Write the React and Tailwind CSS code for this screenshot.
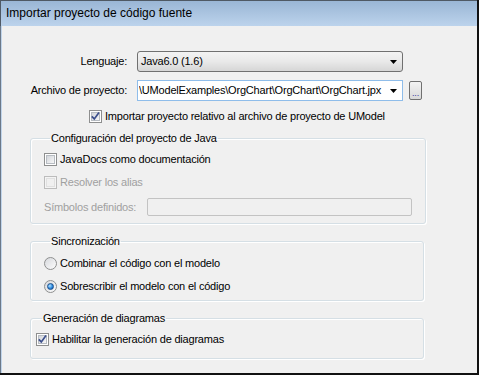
import React from "react";

function Check({ checked, disabled }) {
    return (
        <span
            className={`flex h-[13px] w-[13px] shrink-0 items-center justify-center border ${
                disabled ? "border-[#bcbcbc] bg-[#f4f4f4]" : "border-[#8e8f8f] bg-white"
            }`}
        >
            <span
                className={`flex h-[9px] w-[9px] items-center justify-center border ${
                    disabled
                        ? "border-[#e0e0e0] bg-[#f0f0f0]"
                        : "border-[#b7bcc2] bg-linear-to-br from-[#d3d6db] to-[#f7f7f7]"
                }`}
            >
                {checked && (
                    <svg width="9" height="9" viewBox="0 0 9 9" className="overflow-visible">
                        <path d="M0.8 4.3 L3.3 6.9 L8 0.6" fill="none" stroke="#3c4f8c" strokeWidth="1.7" />
                    </svg>
                )}
            </span>
        </span>
    );
}

function Radio({ checked }) {
    return (
        <span className="flex h-[13px] w-[13px] shrink-0 items-center justify-center rounded-full border border-[#8e8f8f] bg-linear-to-br from-[#d6d8dc] to-[#fdfdfd]">
            {checked && (
                <span className="h-[7px] w-[7px] rounded-full border border-[#1c4f8c] bg-[radial-gradient(circle_at_35%_35%,#b6e4ff,#2d8be0_55%,#0c4f9e)]" />
            )}
        </span>
    );
}

function Arrow() {
    return (
        <svg width="7" height="4" viewBox="0 0 7 4" className="shrink-0">
            <path d="M0 0 H7 L3.5 4 Z" fill="#000" />
        </svg>
    );
}

function Group({ title, className, children }) {
    return (
        <fieldset className={`ml-[28px] w-[394px] rounded-[3px] border border-[#d5dfe5] shadow-[inset_1px_1px_0_#fff,1px_1px_0_#fff] ${className}`}>
            <legend className="ml-[6px] px-[1px] leading-[13px]">{title}</legend>
            {children}
        </fieldset>
    );
}

export default function App() {
    return (
        <div className="flex h-[375px] w-[479px] flex-col border-r-2 border-b-2 border-[#111] font-['Liberation_Sans',Arial,sans-serif] text-[11px] leading-[13px] tracking-[-0.2px] text-black">
            {/* title bar */}
            <div className="flex h-[26px] shrink-0 items-center border-t border-l border-[#4f5964] bg-linear-to-b from-[#9ab6d5] to-[#bcd3ec] pl-[5px] text-[12px] tracking-normal">
                Importar proyecto de código fuente
            </div>

            <div className="flex flex-1 flex-col border-l border-[#6b7888]">
                <div className="flex flex-1 flex-col border-l border-[#c0d4ea] bg-[#f0f0f0]">
                    {/* Lenguaje */}
                    <div className="mt-[25px] flex items-center">
                        <span className="w-[125px] text-right">Lenguaje:</span>
                        <div className="ml-[10px] flex h-[21px] w-[266px] items-center rounded-[3px] border border-[#707070] bg-linear-to-b from-[#f3f3f3] via-[#e9e9e9] to-[#d6d6d6] pr-[5px] pl-[3px]">
                            <span className="flex-1">Java6.0 (1.6)</span>
                            <Arrow />
                        </div>
                    </div>

                    {/* Archivo de proyecto */}
                    <div className="mt-[8px] flex items-center">
                        <span className="w-[125px] text-right">Archivo de proyecto:</span>
                        <div className="ml-[10px] flex h-[21px] w-[266px] items-center gap-[4px] border border-[#8fbdea] bg-white pr-[5px] pl-[1px]">
                            <span className="flex-1 overflow-hidden whitespace-nowrap">
                                \UModelExamples\OrgChart\OrgChart\OrgChart.jpx
                            </span>
                            <Arrow />
                        </div>
                        <div className="ml-[6px] flex h-[19px] w-[13px] items-end justify-center rounded-[2px] border border-[#707070] bg-linear-to-b from-[#f3f3f3] to-[#d9d9d9] pb-[1px] text-[9px] leading-[9px] text-[#3a3aa0]">
                            ...
                        </div>
                    </div>

                    {/* Importar relativo */}
                    <label className="mt-[9px] ml-[87px] flex items-center gap-[3px]">
                        <Check checked />
                        <span>Importar proyecto relativo al archivo de proyecto de UModel</span>
                    </label>

                    <Group title="Configuración del proyecto de Java" className="mt-[9px] px-[13px] pt-[8px] pb-[7px]">
                        <label className="flex items-center gap-[3px]">
                            <Check />
                            <span>JavaDocs como documentación</span>
                        </label>
                        <label className="mt-[10px] flex items-center gap-[3px] text-[#a0a0a0]">
                            <Check disabled />
                            <span>Resolver los alias</span>
                        </label>
                        <div className="mt-[9px] flex items-center text-[#a0a0a0]">
                            <span className="w-[103px]">Símbolos definidos:</span>
                            <div className="h-[18px] w-[265px] rounded-[2px] border border-[#c3c3c3] bg-[#f0f0f0]" />
                        </div>
                    </Group>

                    <Group title="Sincronización" className="mt-[11px] px-[13px] pt-[9px] pb-[7px]">
                        <label className="flex items-center gap-[3px]">
                            <Radio />
                            <span>Combinar el código con el modelo</span>
                        </label>
                        <label className="mt-[10px] flex items-center gap-[3px]">
                            <Radio checked />
                            <span>Sobrescribir el modelo con el código</span>
                        </label>
                    </Group>

                    <Group title="Generación de diagramas" className="mt-[11px] px-[5px] pt-[8px] pb-[12px]">
                        <label className="flex items-center gap-[3px]">
                            <Check checked />
                            <span>Habilitar la generación de diagramas</span>
                        </label>
                    </Group>
                </div>
            </div>
        </div>
    );
}
